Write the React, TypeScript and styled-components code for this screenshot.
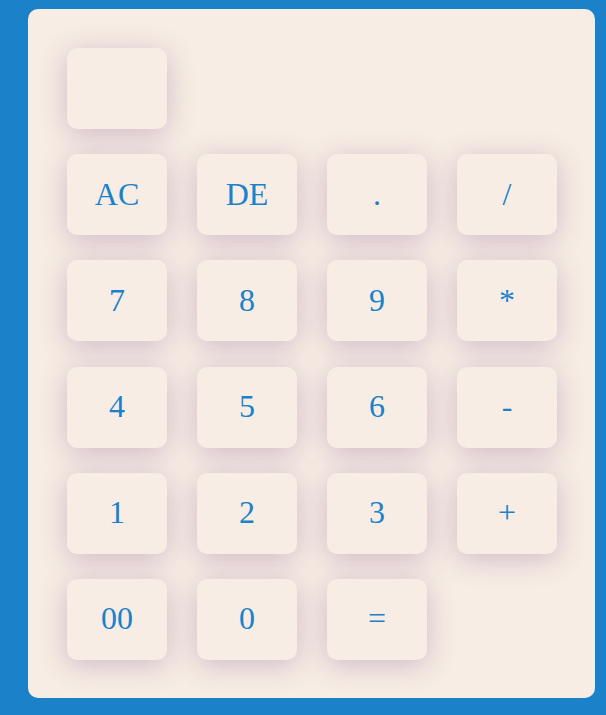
import React from "react";
import styled, { createGlobalStyle } from "styled-components";

const Global = createGlobalStyle`
  html, body {
    margin: 0;
    padding: 0;
    background: #1b81c9;
  }
  body {
    font-family: "Liberation Serif", "Times New Roman", serif;
  }
`;

const Page = styled.div`
  padding: 9px 11px 17px 28px;
  display: flex;
`;

const Card = styled.div`
  background: #f7ede4;
  border-radius: 10px;
  width: 567px;
  box-sizing: border-box;
  padding: 39px 38px 38px 39px;
`;

const Grid = styled.div`
  display: grid;
  grid-template-columns: repeat(4, 100px);
  grid-auto-rows: 81px;
  column-gap: 30px;
  row-gap: 25.2px;
`;

const Key = styled.div`
  width: 100px;
  height: 81px;
  border-radius: 10px;
  background: #f7ede4;
  box-shadow: 0 5px 28px rgba(115, 65, 135, 0.3);
  display: flex;
  align-items: center;
  justify-content: center;
  color: #1b81c9;
  font-family: "Liberation Serif", "Times New Roman", serif;
  font-size: 32px;
  line-height: 1;
  padding-bottom: 2px;
  box-sizing: border-box;
`;

const Display = styled(Key)`
  grid-column: 1 / span 1;
  grid-row: 1;
`;

const Spacer = styled.span``;

const keys = [
  "AC", "DE", ".", "/",
  "7", "8", "9", "*",
  "4", "5", "6", "-",
  "1", "2", "3", "+",
  "00", "0", "=",
];

export default function App() {
  return (
    <>
      <Global />
      <Page>
        <Card>
          <Grid>
            <Display />
            <Spacer />
            <Spacer />
            <Spacer />
            {keys.map((k) => (
              <Key key={k}>{k}</Key>
            ))}
          </Grid>
        </Card>
      </Page>
    </>
  );
}
